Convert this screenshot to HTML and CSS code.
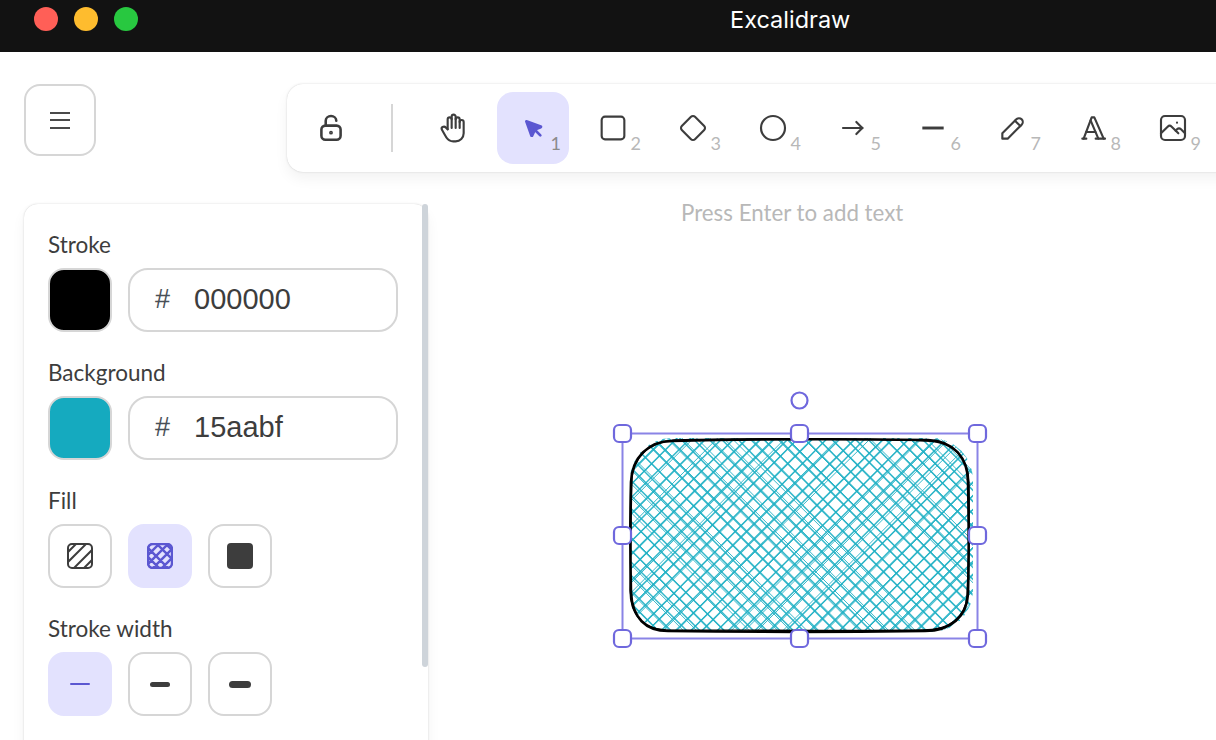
FILE: index.html
```html
<!DOCTYPE html>
<html lang="en">
<head>
    <meta charset="UTF-8">
    <title>Excalidraw</title>
    <link rel="stylesheet" href="styles.css">
</head>
<body>
    <header class="titlebar">
        <div class="lights">
            <span class="light red"></span>
            <span class="light yellow"></span>
            <span class="light green"></span>
        </div>
        <div class="app-title">Excalidraw</div>
    </header>

    <main class="workspace">
        <!-- the drawing, coordinates are page pixels -->
        <svg class="drawing" viewBox="0 52 1216 688">
            <defs>
                <clipPath id="shapeClip">
                    <rect x="630" y="438" width="343" height="194" rx="42"></rect>
                </clipPath>
            </defs>
            <g id="hatch" clip-path="url(#shapeClip)"></g>
            <path class="outline" d="M672 441 C750 439 850 439 928 440 C954 441 968 458 968 482 C969 530 969 560 968 594 C967 616 951 631 925 631 C850 632 740 632 668 631 C646 631 632 618 631 592 C630 550 630 520 631 482 C632 458 648 441 672 441 Z"></path>
            <path class="outline thin" d="M674 440 C750 438 860 438 926 441 C956 442 969 460 969 484 C970 530 968 570 967 596 C965 618 949 630 923 630 C850 631 740 630 666 630 C642 629 630 614 630 590 C631 550 631 510 632 478 C634 454 652 442 674 440 Z"></path>
            <rect class="sel-box" x="622.5" y="433.5" width="355" height="205"></rect>
            <circle class="handle" cx="799.5" cy="400.5" r="8"></circle>
            <rect class="handle" x="614" y="425" width="17" height="17" rx="5"></rect>
            <rect class="handle" x="791" y="425" width="17" height="17" rx="5"></rect>
            <rect class="handle" x="969" y="425" width="17" height="17" rx="5"></rect>
            <rect class="handle" x="614" y="527" width="17" height="17" rx="5"></rect>
            <rect class="handle" x="969" y="527" width="17" height="17" rx="5"></rect>
            <rect class="handle" x="614" y="630" width="17" height="17" rx="5"></rect>
            <rect class="handle" x="791" y="630" width="17" height="17" rx="5"></rect>
            <rect class="handle" x="969" y="630" width="17" height="17" rx="5"></rect>
        </svg>

        <div class="top-row">
            <button class="menu-btn" type="button">
                <span class="bar"></span>
                <span class="bar"></span>
                <span class="bar"></span>
            </button>

            <div class="toolbar">
                <button class="tool tool-lock" type="button">
                    <svg class="icon" viewBox="0 0 20 20"><path d="M13.500 8.500h-7a2.500 2.500 0 0 0-2.500 2.500v3.800a2.500 2.500 0 0 0 2.500 2.500h7a2.500 2.500 0 0 0 2.500-2.500V11a2.500 2.500 0 0 0-2.500-2.500Z"/><circle class="lock-dot" cx="10" cy="12.900" r=".7"/><path d="M6.700 8.300V5.400C6.700 3.800 8.200 2.500 10 2.500s3.300 1.300 3.300 2.900"/></svg>
                </button>
                <span class="divider"></span>
                <button class="tool" type="button">
                    <svg class="icon" viewBox="0 0 24 24"><path d="M8 13V5.500a1.500 1.500 0 0 1 3 0V12"/><path d="M11 5.500v-2a1.500 1.500 0 1 1 3 0V12"/><path d="M14 5.500a1.500 1.500 0 0 1 3 0V12"/><path d="M17 7.500a1.500 1.500 0 0 1 3 0V16a6 6 0 0 1-6 6h-2 .208a6 6 0 0 1-5.012-2.700l-.196-.3c-.312-.479-1.407-2.388-3.286-5.728a1.500 1.500 0 0 1 .536-2.022 1.867 1.867 0 0 1 2.280.280L8 13"/></svg>
                </button>
                <button class="tool active" type="button">
                    <svg class="icon cursor" viewBox="0 0 24 24"><path class="filled" d="M7 7l3.800 10.600c.1.300.5.300.6 0l2-4.400 4.400-1.800c.3-.1.300-.5 0-.6L7 7z"/><path d="M13.500 13.500L17.500 17.500"/></svg>
                    <span class="key">1</span>
                </button>
                <button class="tool" type="button">
                    <svg class="icon" viewBox="0 0 24 24"><rect x="3.500" y="3.500" width="17" height="17" rx="2.500"/></svg>
                    <span class="key">2</span>
                </button>
                <button class="tool" type="button">
                    <svg class="icon" viewBox="0 0 24 24"><path d="M10.500 20.400l-6.900-6.900c-.781-.781-.781-2.219 0-3l6.900-6.900c.781-.781 2.219-.781 3 0l6.900 6.900c.781.781.781 2.219 0 3l-6.900 6.900c-.781.781-2.219.781-3 0z"/></svg>
                    <span class="key">3</span>
                </button>
                <button class="tool" type="button">
                    <svg class="icon" viewBox="0 0 24 24"><circle cx="12" cy="12" r="9"/></svg>
                    <span class="key">4</span>
                </button>
                <button class="tool" type="button">
                    <svg class="icon" viewBox="0 0 24 24"><path d="M4.500 12h14.500"/><path d="M14.500 16.500l4.500-4.500"/><path d="M14.500 7.500l4.500 4.500"/></svg>
                    <span class="key">5</span>
                </button>
                <button class="tool" type="button">
                    <svg class="icon icon-line" viewBox="0 0 24 24"><path d="M4 12h16"/></svg>
                    <span class="key">6</span>
                </button>
                <button class="tool" type="button">
                    <svg class="icon" viewBox="0 0 24 24"><path d="M4 20h4L18.500 9.500a2.828 2.828 0 0 0-4-4L4 16v4"/><path d="M13.500 6.500l4 4"/></svg>
                    <span class="key">7</span>
                </button>
                <button class="tool" type="button">
                    <svg class="icon" viewBox="0 0 24 24"><path d="M4 20h3"/><path d="M14 20h7"/><path d="M6.900 15h6.900"/><path d="M10.200 6.300L16 20"/><path d="M5 20l6-16h2l7 16"/></svg>
                    <span class="key">8</span>
                </button>
                <button class="tool" type="button">
                    <svg class="icon" viewBox="0 0 24 24"><path d="M15 8h.01"/><rect x="3" y="3" width="18" height="18" rx="3"/><path d="M3 16l5-5c.928-.893 2.072-.893 3 0l5 5"/><path d="M14 14l1-1c.928-.893 2.072-.893 3 0l3 3"/></svg>
                    <span class="key">9</span>
                </button>
            </div>
        </div>

        <div class="lower-row">
            <aside class="panel">
                <span class="scroll-thumb"></span>

                <h3 class="prop-label">Stroke</h3>
                <div class="color-row">
                    <span class="swatch swatch-black"></span>
                    <div class="hex-input"><span class="hash">#</span><span class="hex-value">000000</span></div>
                </div>

                <h3 class="prop-label">Background</h3>
                <div class="color-row">
                    <span class="swatch swatch-cyan"></span>
                    <div class="hex-input"><span class="hash">#</span><span class="hex-value">15aabf</span></div>
                </div>

                <h3 class="prop-label">Fill</h3>
                <div class="option-row">
                    <button class="option" type="button">
                        <svg class="fill-icon" viewBox="0 0 26 26">
                            <clipPath id="fillA"><rect x="1" y="1" width="24" height="24" rx="4"/></clipPath>
                            <g clip-path="url(#fillA)"><path d="M-2 12L12-2M-2 22L22-2M4 28L28 4M14 28L28 14"/></g>
                            <rect x="1" y="1" width="24" height="24" rx="4"/>
                        </svg>
                    </button>
                    <button class="option active" type="button">
                        <svg class="fill-icon cross" viewBox="0 0 26 26">
                            <clipPath id="fillB"><rect x="0" y="0" width="26" height="26" rx="6"/></clipPath>
                            <g clip-path="url(#fillB)"><path d="M-5 9L9-5M-5 18L18-5M-5 27L27-5M-5 36L36-5M4 36L36 4M13 36L36 13M22 36L36 22M-5 17L14 36M-5 8L23 36M-5-1L32 36M4-5L36 27M13-5L36 18M22-5L36 9"/></g>
                            <rect x="1" y="1" width="24" height="24" rx="5"/>
                        </svg>
                    </button>
                    <button class="option" type="button">
                        <span class="solid-fill"></span>
                    </button>
                </div>

                <h3 class="prop-label">Stroke width</h3>
                <div class="option-row">
                    <button class="option active" type="button"><span class="width-line thin"></span></button>
                    <button class="option" type="button"><span class="width-line bold"></span></button>
                    <button class="option" type="button"><span class="width-line extra"></span></button>
                </div>
            </aside>

            <div class="hint">Press Enter to add text</div>
        </div>
    </main>

    <script src="hatch.js"></script>
</body>
</html>
```

FILE: styles.css
```css
* { box-sizing: border-box; }
html, body { margin: 0; height: 100%; overflow: hidden; }
body { font-family: Lato, "Noto Sans", sans-serif; color: #3d3d3d; background: #fff; }
button { font: inherit; color: inherit; padding: 0; background: none; border: 0; }

.titlebar { height: 52px; background: #121212; display: flex; position: relative; }
.lights { display: flex; gap: 16px; padding: 7px 0 0 34px; }
.light { width: 24px; height: 24px; border-radius: 50%; }
.red { background: #ff5f57; }
.yellow { background: #febc2e; }
.green { background: #28c840; }
.app-title { margin-left: 592px; padding-top: 5px; color: #fff; font: 400 23.500px/30px Inter, sans-serif; }

.workspace { position: relative; height: 688px; overflow: hidden; padding: 32px 0 0 24px; }
.drawing { position: absolute; left: 0; top: 0; width: 1216px; height: 688px; }
.outline { fill: none; stroke: #000; stroke-width: 2.6; }
.outline.thin { stroke-width: 1.3; }
.sel-box { fill: none; stroke: #8a84e6; stroke-width: 2; }
.handle { fill: #fff; stroke: #6f68dd; stroke-width: 2.2; }

.top-row { display: flex; align-items: flex-start; position: relative; }
.menu-btn { width: 72px; height: 72px; flex: none; border: 2px solid #d6d6d6; border-radius: 16px; background: #fff; display: flex; flex-direction: column; align-items: center; justify-content: center; gap: 5.500px; }
.bar { width: 20px; height: 2px; background: #4a4a4a; }

.toolbar { margin-left: 191px; flex: none; display: flex; align-items: center; gap: 8px; padding: 8px; height: 88px; width: 1000px; background: #fff; border-radius: 16px; box-shadow: 0 7px 14px rgba(0,0,0,.05), 0 0 3px rgba(0,0,0,.08), 0 0 1px rgba(0,0,0,.17); }
.tool { position: relative; width: 72px; height: 72px; flex: none; border-radius: 16px; display: flex; align-items: center; justify-content: center; }
.tool.active { background: #e3e2fe; }
.divider { width: 2px; height: 48px; background: #d6d6d6; margin: 0 16px; flex: none; }
.icon { width: 32px; height: 32px; fill: none; stroke: #3d3d3d; stroke-width: 1.6; stroke-linecap: round; stroke-linejoin: round; }
.icon .lock-dot { stroke-width: 1; }
.icon-line { stroke-width: 2.2; stroke-linecap: butt; }
.cursor { stroke: #5b57d1; stroke-width: 2; }
.cursor .filled { fill: #5b57d1; }
.key { position: absolute; right: 8px; bottom: 11px; font-size: 18px; line-height: 20px; color: #b8b8b8; }
.active .key { color: #8b8b8b; }

.lower-row { display: flex; align-items: flex-start; margin-top: 32px; position: relative; }
.panel { position: relative; width: 404px; height: 600px; flex: none; padding: 24px 24px 0; background: #fff; border-radius: 14px; box-shadow: 0 7px 14px rgba(0,0,0,.05), 0 0 3px rgba(0,0,0,.08), 0 0 1px rgba(0,0,0,.17); }
.scroll-thumb { position: absolute; right: 0; top: 0; width: 6px; height: 463px; border-radius: 3px; background: #ced4da; }
.prop-label { margin: 0 0 6px; height: 34px; font-size: 22.500px; line-height: 34px; font-weight: 400; }
.color-row, .option-row { display: flex; gap: 16px; margin-bottom: 24px; height: 64px; }
.swatch { width: 64px; height: 64px; border: 2px solid #d6d6d6; border-radius: 16px; }
.swatch-black { background: #000; }
.swatch-cyan { background: #15aabf; }
.hex-input { width: 270px; height: 64px; border: 2px solid #d6d6d6; border-radius: 20px; display: flex; align-items: center; padding: 0 0 2px 25px; }
.hash { width: 39px; font: 27px "Liberation Sans", sans-serif; color: #495057; }
.hex-value { font: 29px "Liberation Sans", sans-serif; color: #3d3d3d; }

.option { width: 64px; height: 64px; border: 2px solid #d6d6d6; border-radius: 16px; display: flex; align-items: center; justify-content: center; }
.option.active { background: #e3e2fe; border-color: #e3e2fe; }
.fill-icon { width: 26px; height: 26px; fill: none; stroke: #3d3d3d; stroke-width: 2; }
.option.active .fill-icon { stroke: #5b57d1; }
.fill-icon.cross { stroke-width: 2.400; }
.solid-fill { width: 26px; height: 26px; border-radius: 4px; background: #3d3d3d; }
.width-line { width: 20px; background: #3d3d3d; border-radius: 3px; }
.width-line.thin { height: 2px; background: #5b57d1; }
.width-line.bold { height: 5px; }
.width-line.extra { height: 7px; width: 22px; border-radius: 4px; }

.hint { margin: -1px 0 0 253px; font-size: 22.300px; line-height: 20px; color: #b8b8b8; white-space: nowrap; }
```

FILE: hatch.js
```js
// cross hatch fill of the selected rectangle, drawn with a fixed seed
var seed = 7;
function rnd(range) {
    seed = (seed * 16807) % 2147483647;
    return ((seed / 2147483647) - 0.5) * 2 * range;
}

function hatchLine(group, c, dir) {
    // each line is stroked twice, a little apart
    for (var n = 0; n < 2; n++) {
        var x1 = c + rnd(3), x2 = c + 420 * dir + rnd(3);
        var midX = (x1 + x2) / 2 + rnd(1.5);
        var midY = 640 + rnd(1.5);
        var path = document.createElementNS('http://www.w3.org/2000/svg', 'path');
        path.setAttribute('d', 'M' + x1 + ' 430Q' + midX + ' ' + midY + ' ' + x2 + ' 850');
        path.setAttribute('fill', 'none');
        path.setAttribute('stroke', '#1fb0c4');
        path.setAttribute('stroke-width', n ? '1' : '1.500');
        path.setAttribute('stroke-opacity', '.9');
        group.appendChild(path);
    }
}

var group = document.getElementById('hatch');
var c;
for (c = 200; c < 1000; c += 13.500) hatchLine(group, c, 1);
for (c = 620; c < 1420; c += 13.500) hatchLine(group, c, -1);
```
